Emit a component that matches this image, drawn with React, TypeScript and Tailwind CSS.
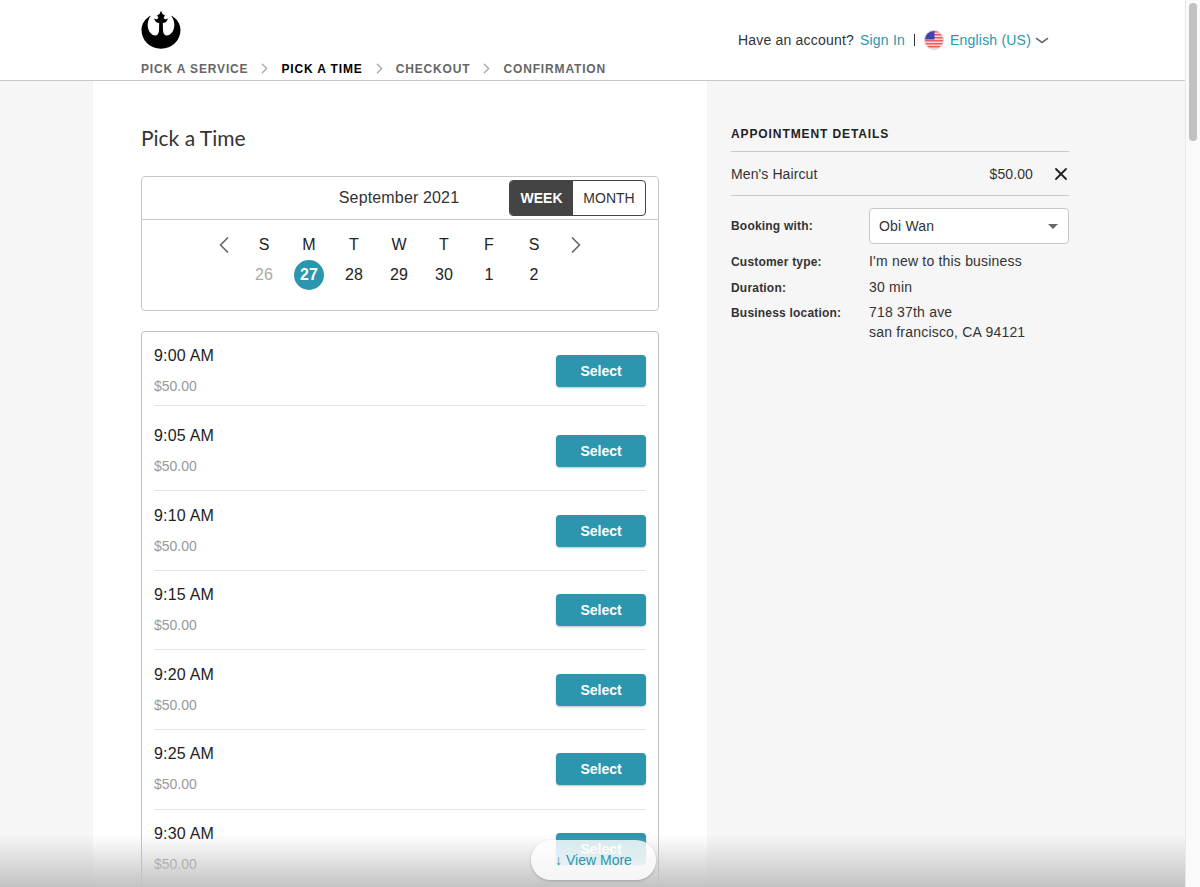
import { ChevronLeft, ChevronRight, X } from "lucide-react";

const steps = ["PICK A SERVICE", "PICK A TIME", "CHECKOUT", "CONFIRMATION"];
const days = ["S", "M", "T", "W", "T", "F", "S"];
const dates = ["26", "27", "28", "29", "30", "1", "2"];
const slots = ["9:00 AM", "9:05 AM", "9:10 AM", "9:15 AM", "9:20 AM", "9:25 AM", "9:30 AM"];

function RebelLogo() {
  return (
    <svg width="40" height="39" viewBox="0 0 40 39" className="block">
      <path
        fill="#000"
        d="M10 5.5C4 8.5.5 14 .5 20 .5 30.5 9 38.7 20 38.7S39.5 30.5 39.5 20C39.5 14 36 8.5 30 5.5 33 9.5 34 14 33 18 32 22.5 28.6 25.8 25.4 25.5 23 25.3 22.2 23 22 20L21.8 13C24 13 26 11.5 27 8.5L24 9.5 22.6 7.5 24 5.5 21.5 4 20 .8 18.5 4 16 5.5 17.4 7.5 16 9.5 13 8.5C14 11.5 16 13 18.2 13L18 20C17.8 23 17 25.3 14.6 25.5 11.4 25.8 8 22.5 7 18 6 14 7 9.5 10 5.5Z"
      />
    </svg>
  );
}

function FlagIcon() {
  return (
    <svg width="20" height="20" viewBox="0 0 20 20" className="block">
      <clipPath id="flagclip">
        <circle cx="10" cy="10" r="9.5" />
      </clipPath>
      <g clipPath="url(#flagclip)">
        <rect width="20" height="20" fill="#f7d4d4" />
        <rect y="1" width="20" height="1.5" fill="#ef5a5a" />
        <rect y="4" width="20" height="1.5" fill="#ef5a5a" />
        <rect y="7" width="20" height="1.5" fill="#ef5a5a" />
        <rect y="10" width="20" height="1.5" fill="#ef5a5a" />
        <rect y="13" width="20" height="1.5" fill="#ef5a5a" />
        <rect y="16" width="20" height="1.5" fill="#ef5a5a" />
        <rect width="10.5" height="9.5" fill="#3b46b5" />
      </g>
      <circle cx="10" cy="10" r="9.5" fill="none" stroke="#d8d8d8" />
    </svg>
  );
}

function SlotRow({ time, index }: { time: string; index: number }) {
  return (
    <div
      className={`flex items-center justify-between border-b border-[#e3e3e3] ${index === 0 ? "h-[74px] pt-[4px]" : index === 1 ? "h-[85.3px] pt-[5px]" : "h-[79.6px]"}`}
    >
      <div className="flex flex-col">
        <span className="text-base leading-[20px] tracking-[0.2px] text-[#222]">{time}</span>
        <span className="mt-[10px] text-sm leading-[20px] text-[#999]">$50.00</span>
      </div>
      <button className="h-8 w-[90px] rounded-[4px] bg-[#2b96ad] text-sm font-bold text-white shadow-[0_1px_2px_rgba(0,0,0,0.25)]">
        Select
      </button>
    </div>
  );
}

export default function App() {
  return (
    <div className="relative flex h-[887px] w-[1200px] overflow-hidden bg-[#f6f6f6] font-['Liberation_Sans',Arial,sans-serif] text-[#222]">
      <div className="flex w-[1185px] flex-col">
        <header className="h-[81px] shrink-0 border-b border-[#c8c8c8] bg-white pl-[141px] pr-[136px]">
          <div className="flex h-[60px] items-start justify-between">
            <div className="pt-[10px]">
              <RebelLogo />
            </div>
            <div className="flex items-center pt-[30px] text-sm leading-5 tracking-[0.2px]">
              <span className="text-[#333]">Have an account?</span>
              <a className="ml-[6px] text-[#2b96ad]">Sign In</a>
              <span className="mx-[9px] h-[12px] w-px bg-[#333]" />
              <FlagIcon />
              <a className="ml-[6px] text-[#2b96ad]">English (US)</a>
              <svg width="14" height="7" viewBox="0 0 14 7" className="ml-[4px] block">
                <path d="M1 1.2 7 5.4l6-4.2" fill="none" stroke="#666" strokeWidth="1.6" />
              </svg>
            </div>
          </div>
          <nav className="flex items-center text-xs font-bold leading-4 tracking-[0.85px] text-[#666]">
            {steps.map((step, i) => (
              <div key={step} className="flex items-center">
                {i > 0 && <ChevronRight className="mx-[8px] h-[17px] w-[17px] text-[#aaa]" strokeWidth={2} />}
                <span className={i === 1 ? "text-black" : ""}>{step}</span>
              </div>
            ))}
          </nav>
        </header>

        <div className="flex min-h-0 flex-1 pl-[93px]">
          <main className="w-[614px] bg-white px-[48px] pt-[43px]">
            <h1 className="font-['Lato',sans-serif] text-[21px] leading-7 text-[#333]">Pick a Time</h1>

            <section className="mt-[24px] h-[135px] rounded-[4px] border border-[#c8c8c8]">
              <div className="relative flex h-[43px] items-center justify-center border-b border-[#c8c8c8] pr-[2px]">
                <span className="text-base tracking-[0.15px] text-[#333]">September 2021</span>
                <div className="absolute right-3 top-[3px] flex h-9 w-[137px] overflow-hidden rounded-[4px] border border-[#444] text-sm">
                  <span className="flex w-[63px] items-center justify-center bg-[#444] font-bold text-white">WEEK</span>
                  <span className="flex flex-1 items-center justify-center text-[#333]">MONTH</span>
                </div>
              </div>
              <div className="flex justify-center pr-[2px] pt-[15px]">
                <div className="grid w-[405px] grid-cols-[45px_45px_45px_45px_45px_45px_45px_45px_45px] items-center justify-items-center text-base leading-5">
                  <ChevronLeft className="-my-1 ml-[10px] h-7 w-7 text-[#666]" strokeWidth={1.5} />
                  {days.map((d, i) => (
                    <span key={i} className="h-5">{d}</span>
                  ))}
                  <ChevronRight className="-my-1 mr-[6px] h-7 w-7 text-[#666]" strokeWidth={1.5} />
                  <span className="mt-[5px]" />
                  {dates.map((d) => (
                    <span
                      key={d}
                      className={`mt-[5px] flex h-[30px] w-[30px] items-center justify-center rounded-full ${d === "26" ? "text-[#aaa]" : ""} ${d === "27" ? "bg-[#2b96ad] font-bold text-white" : ""}`}
                    >
                      {d}
                    </span>
                  ))}
                </div>
              </div>
            </section>

            <section className="mt-[20px] rounded-[4px] border border-[#c0c0c0] px-3 pb-24">
              {slots.map((time, i) => (
                <SlotRow key={time} time={time} index={i} />
              ))}
            </section>
          </main>

          <aside className="flex-1 pl-6 pr-[116px] pt-[45px]">
            <h2 className="border-b border-[#c8c8c8] pb-[9px] text-xs font-bold leading-4 tracking-[0.9px] text-[#222]">
              APPOINTMENT DETAILS
            </h2>
            <div className="flex h-[44px] items-center justify-between border-b border-[#c8c8c8] text-sm tracking-[0.1px] text-[#333]">
              <span>Men's Haircut</span>
              <div className="flex items-center">
                <span>$50.00</span>
                <X className="-mr-[2px] ml-[18px] h-5 w-5 text-[#222]" strokeWidth={2.2} />
              </div>
            </div>
            <dl className="mt-3 grid grid-cols-[138px_1fr] items-center text-sm text-[#333]">
              <dt className="text-xs font-bold tracking-[0.2px]">Booking with:</dt>
              <dd className="flex h-9 items-center justify-between rounded-[4px] border border-[#c8c8c8] bg-white pl-[9px] pr-[10px] tracking-[0.2px]">
                Obi Wan
                <span className="h-0 w-0 border-x-[5px] border-t-[5px] border-x-transparent border-t-[#666]" />
              </dd>
              <dt className="mt-[7px] pt-[2px] text-xs font-bold leading-[18px] tracking-[0.2px]">Customer type:</dt>
              <dd className="mt-[7px] leading-5 tracking-[0.2px]">I'm new to this business</dd>
              <dt className="mt-[6px] pt-[2px] text-xs font-bold leading-[18px] tracking-[0.2px]">Duration:</dt>
              <dd className="mt-[6px] leading-5 tracking-[0.2px]">30 min</dd>
              <dt className="mt-[5px] self-start pt-[2px] text-xs font-bold leading-[18px] tracking-[0.2px]">Business location:</dt>
              <dd className="mt-[5px] leading-5 tracking-[0.2px]">
                718 37th ave
                <br />
                san francisco, CA 94121
              </dd>
            </dl>
          </aside>
        </div>
      </div>

      <div className="w-[15px] shrink-0 border-l border-[#e8e8e8] bg-[#fafafa] px-[3px] pt-[3px]">
        <div className="h-[138px] rounded-full bg-[#c1c1c1]" />
      </div>

      <div className="pointer-events-none absolute bottom-0 left-0 h-[52px] w-[1185px] bg-gradient-to-b from-[rgba(195,195,195,0)] to-[rgba(195,195,195,1)]" />
      <button className="absolute left-[531px] top-[840px] flex h-10 w-[125px] items-center justify-center rounded-full bg-white/80 text-sm text-[#2b96ad] shadow-[0_1px_3px_rgba(0,0,0,0.2)]">
        ↓ View More
      </button>
    </div>
  );
}
